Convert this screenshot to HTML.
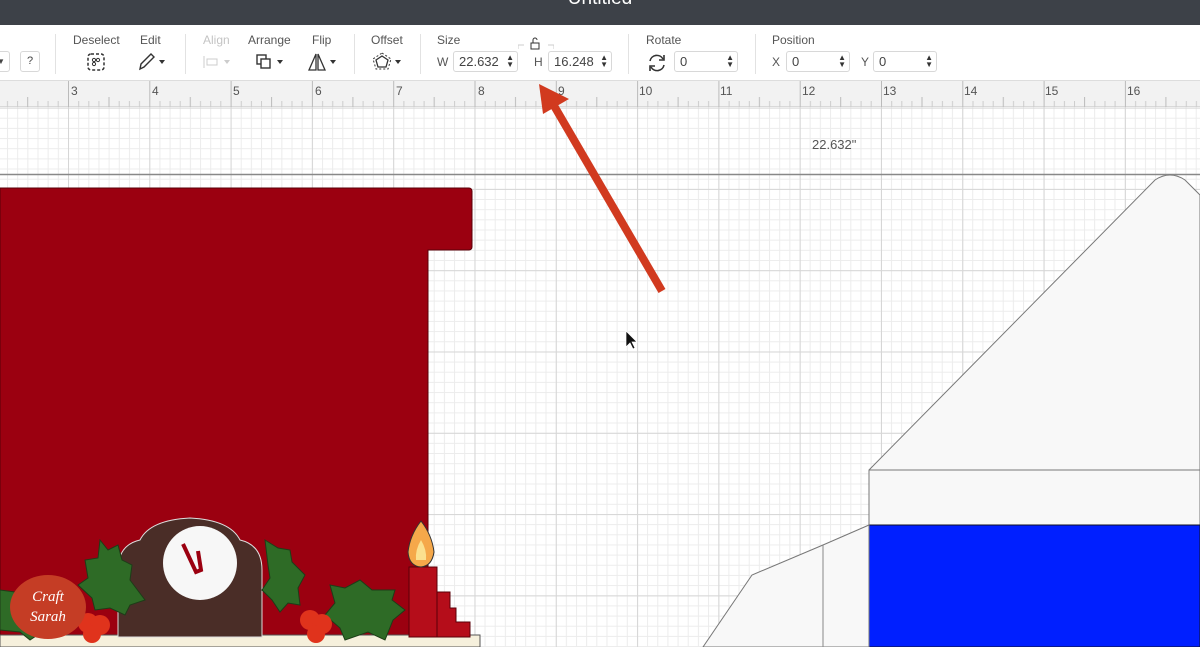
<!DOCTYPE html>
<html><head><meta charset="utf-8"><style>
*{margin:0;padding:0;box-sizing:border-box}
body{width:1200px;height:647px;overflow:hidden;background:#fff;font-family:"Liberation Sans",sans-serif;position:relative}
.top{position:absolute;left:0;top:0;width:1200px;height:25px;background:#3d4148;color:#fff;font-size:19px;text-align:center;line-height:0}
.top span{position:relative;top:-1px}
.tb{position:absolute;top:25px;left:0;width:1200px;height:56px;background:#fff;border-bottom:1px solid #ddd;font-size:12px;color:#555}
.lb{position:absolute;top:8px}
.sep{position:absolute;top:9px;width:1px;height:40px;background:#e2e2e2}
.inp{position:absolute;top:26px;height:21px;border:1px solid #d8d8d8;border-radius:3px;font-size:13px;color:#444;padding:2px 0 0 5px;background:#fff}
.sp{position:absolute;right:3px;top:2px;font-size:8px;line-height:7px;color:#333}
.ruler{position:absolute;top:81px;left:0;width:1200px;height:26px;background:#f2f2f2;border-bottom:1px solid #d9d9d9}
.rn{position:absolute;top:3px;font-size:12px;color:#555}
.ic{position:absolute;top:27px}
</style></head><body>
<div class="top"><span>Untitled</span></div>
<div class="tb">
 <div class="inp" style="left:-6px;width:16px;font-size:8px;padding:5px 0 0 2px">▼</div>
 <div class="inp" style="left:20px;width:20px;font-size:11px;padding:3px 0 0 6px">?</div>
 <div class="sep" style="left:55px"></div>
 <div class="lb" style="left:73px">Deselect</div>
 <svg class="ic" style="left:86px" width="20" height="20" viewBox="0 0 20 20"><rect x="2" y="2" width="16" height="16" rx="3" fill="none" stroke="#333" stroke-width="1.5" stroke-dasharray="3 2"/><circle cx="8" cy="8" r="1.6" fill="none" stroke="#333"/><circle cx="12" cy="8" r="1.6" fill="none" stroke="#333"/><circle cx="8" cy="12" r="1.6" fill="none" stroke="#333"/></svg>
 <div class="lb" style="left:140px">Edit</div>
 <svg class="ic" style="left:137px" width="30" height="20" viewBox="0 0 30 20"><path d="M3 17 L4 12 L14 2 L17 5 L7 15 Z" fill="none" stroke="#333" stroke-width="1.4"/><path d="M22 8h6l-3 4z" fill="#333"/></svg>
 <div class="sep" style="left:185px"></div>
 <div class="lb" style="left:203px;color:#c4c4c4">Align</div>
 <svg class="ic" style="left:203px" width="30" height="20" viewBox="0 0 30 20"><path d="M1 4v12" stroke="#ccc"/><rect x="4" y="7" width="10" height="6" fill="none" stroke="#ccc"/><path d="M21 8h6l-3 4z" fill="#ccc"/></svg>
 <div class="lb" style="left:248px">Arrange</div>
 <svg class="ic" style="left:255px" width="32" height="20" viewBox="0 0 32 20"><rect x="2" y="3" width="9" height="9" fill="none" stroke="#333" stroke-width="1.4"/><rect x="6" y="7" width="9" height="9" fill="#fff" stroke="#333" stroke-width="1.4"/><path d="M22 8h6l-3 4z" fill="#333"/></svg>
 <div class="lb" style="left:312px">Flip</div>
 <svg class="ic" style="left:307px" width="32" height="20" viewBox="0 0 32 20"><path d="M9 2L2 18h7z" fill="none" stroke="#333" stroke-width="1.3"/><path d="M11 2l7 16h-7z" fill="none" stroke="#333" stroke-width="1.3"/><path d="M23 8h6l-3 4z" fill="#333"/></svg>
 <div class="sep" style="left:354px"></div>
 <div class="lb" style="left:371px">Offset</div>
 <svg class="ic" style="left:372px" width="32" height="22" viewBox="0 0 32 22"><path d="M10 4l6 4-2 7H6L4 8z" fill="none" stroke="#333" stroke-width="1.3"/><path d="M10 1l9 6-3 10H4L1 7z" fill="none" stroke="#333" stroke-dasharray="2 2"/><path d="M23 8h6l-3 4z" fill="#333"/></svg>
 <div class="sep" style="left:420px"></div>
 <div class="lb" style="left:437px">Size</div>
 <div class="lb" style="left:437px;top:30px;font-size:12px">W</div>
 <div class="inp" style="left:453px;width:65px">22.632<span class="sp">▲<br>▼</span></div>
 <svg style="position:absolute;left:518px;top:12px" width="36" height="14" viewBox="0 0 36 14"><path d="M0 12V8h6M30 8h6v4" fill="none" stroke="#ccc"/><rect x="13" y="6" width="8" height="6" fill="none" stroke="#333"/><path d="M15 6V3a2 2 0 0 1 4 0" fill="none" stroke="#333"/></svg>
 <div class="lb" style="left:534px;top:30px">H</div>
 <div class="inp" style="left:548px;width:64px">16.248<span class="sp">▲<br>▼</span></div>
 <div class="sep" style="left:628px"></div>
 <div class="lb" style="left:646px">Rotate</div>
 <svg class="ic" style="left:646px;top:27px" width="22" height="22" viewBox="0 0 22 22"><path d="M4 9a7 7 0 0 1 13-2M18 13a7 7 0 0 1-13 2" fill="none" stroke="#333" stroke-width="1.6"/><path d="M18 3v5h-5M4 19v-5h5" fill="none" stroke="#333" stroke-width="1.6"/></svg>
 <div class="inp" style="left:674px;width:64px">0<span class="sp">▲<br>▼</span></div>
 <div class="sep" style="left:755px"></div>
 <div class="lb" style="left:772px">Position</div>
 <div class="lb" style="left:772px;top:30px">X</div>
 <div class="inp" style="left:786px;width:64px">0<span class="sp">▲<br>▼</span></div>
 <div class="lb" style="left:861px;top:30px">Y</div>
 <div class="inp" style="left:873px;width:64px">0<span class="sp">▲<br>▼</span></div>
</div>
<div class="ruler">
 <svg width="1200" height="26" style="position:absolute;left:0;top:0">
  <defs><pattern id="rt" x="-13.3" y="0" width="81.3" height="26" patternUnits="userSpaceOnUse">
   <path d="M0.5 0V26" stroke="#bbb"/>
   <path d="M10.7 20V26M20.8 20V26M30.9 20V26M51.2 20V26M61.4 20V26M71.5 20V26" stroke="#ccc"/>
   <path d="M41 16V26" stroke="#bbb"/></pattern></defs>
  <rect width="1200" height="26" fill="url(#rt)"/>
 </svg>
 <span class="rn" style="left:71px">3</span><span class="rn" style="left:152px">4</span><span class="rn" style="left:233px">5</span><span class="rn" style="left:315px">6</span><span class="rn" style="left:396px">7</span><span class="rn" style="left:478px">8</span><span class="rn" style="left:558px">9</span><span class="rn" style="left:639px">10</span><span class="rn" style="left:720px">11</span><span class="rn" style="left:802px">12</span><span class="rn" style="left:883px">13</span><span class="rn" style="left:964px">14</span><span class="rn" style="left:1045px">15</span><span class="rn" style="left:1127px">16</span>
</div>
<svg width="1200" height="540" style="position:absolute;left:0;top:107px" viewBox="0 107 1200 540">
 <defs>
  <pattern id="mn" x="-13.3" y="26.3" width="10.16" height="10.16" patternUnits="userSpaceOnUse"><path d="M0.5 0V10.16M0 0.5H10.16" stroke="#ececec"/></pattern>
  <pattern id="mj" x="-13.3" y="26.3" width="81.3" height="81.3" patternUnits="userSpaceOnUse"><path d="M0.5 0V81.3M0 0.5H81.3" stroke="#d6d6d6"/></pattern>
 </defs>
 <rect x="0" y="107" width="1200" height="540" fill="url(#mn)"/>
 <rect x="0" y="107" width="1200" height="540" fill="url(#mj)"/>
 <text x="812" y="149" font-size="13" fill="#555" font-family="Liberation Sans">22.632"</text>
 <path d="M0 174.5H1200" stroke="#888" stroke-width="1.5"/>
 <path d="M0 188H469a3 3 0 0 1 3 3V247a3 3 0 0 1-3 3H428V647H0Z" fill="#9b0010" stroke="#5a0008"/>
 <path d="M869 470L1155 180Q1170 170 1185 180L1200 195V647H869Z" fill="#f8f8f8" stroke="#777"/>
 <path d="M869 470H1200" stroke="#777"/>
 <rect x="869" y="525" width="331" height="122" fill="#001fff" stroke="#112"/>
 <path d="M869 525L823 545L752 575L703 647H869Z" fill="#f8f8f8" stroke="#777"/>
 <path d="M823 545V647" stroke="#888"/>
 <rect x="0" y="635" width="480" height="12" fill="#f6f0dc" stroke="#555"/>
 <path d="M118 637V570Q118 545 140 540Q150 520 190 518Q230 520 240 540Q262 545 262 570V637Z" fill="#4a2d27" stroke="#ddd"/>
 <circle cx="200" cy="563" r="37" fill="#f7f7f7"/>
 <path d="M183 544L196 572L201 570L198 551" fill="none" stroke="#9b0010" stroke-width="4"/>
 <path d="M100 540L108 550L118 545L122 560L132 565L130 580L145 600L130 605L125 615L110 608L95 610L92 598L78 585L88 578L85 560L98 558Z" fill="#2e6b26" stroke="#1d3d18"/>
 <path d="M265 540L278 548L290 550L292 562L305 575L298 588L300 605L288 603L280 612L272 600L262 590L270 578L268 565Z" fill="#2e6b26" stroke="#1d3d18"/>
 <path d="M330 585L345 588L360 580L372 590L395 590L392 600L405 610L393 620L385 640L368 632L345 640L340 628L325 615L335 603Z" fill="#2e6b26" stroke="#1d3d18"/>
 <path d="M0 590L15 592L30 585L40 596L55 600L52 615L60 630L45 630L30 640L20 632L0 630Z" fill="#2e6b26" stroke="#1d3d18"/>
 <circle cx="88" cy="623" r="10" fill="#e0331c"/><circle cx="100" cy="625" r="10" fill="#e0331c"/><circle cx="92" cy="634" r="9" fill="#e0331c"/>
 <circle cx="310" cy="620" r="10" fill="#e0331c"/><circle cx="322" cy="624" r="10" fill="#e0331c"/><circle cx="316" cy="634" r="9" fill="#e0331c"/>
 <rect x="409" y="567" width="28" height="70" fill="#b50d1a" stroke="#5a0008"/>
 <path d="M437 592H450V608H456V622H470V637H437Z" fill="#b50d1a" stroke="#5a0008"/>
 <path d="M421 521Q432 535 434 552Q432 566 421 567Q409 566 408 552Q410 535 421 521Z" fill="#f5a84a" stroke="#333"/>
 <path d="M421 540Q427 550 426 560H416Q415 550 421 540Z" fill="#fbe08f"/>
 <ellipse cx="48" cy="607" rx="38" ry="32" fill="#c53d25"/>
 <text x="48" y="601" text-anchor="middle" font-family="Liberation Serif" font-style="italic" font-size="15" fill="#fff">Craft</text>
 <text x="48" y="621" text-anchor="middle" font-family="Liberation Serif" font-style="italic" font-size="15" fill="#fff">Sarah</text>
 <path d="M626 331V347L630 343L633 349L635 348L632 342L637 342Z" fill="#111" stroke="#fff" stroke-width="0.7"/>
</svg>
<svg width="1200" height="647" style="position:absolute;left:0;top:0;pointer-events:none">
 <path d="M662 291L553 104" stroke="#d13a1f" stroke-width="8"/>
 <path d="M539 84L569 99L543 114Z" fill="#d13a1f"/>
</svg>
</body></html>
